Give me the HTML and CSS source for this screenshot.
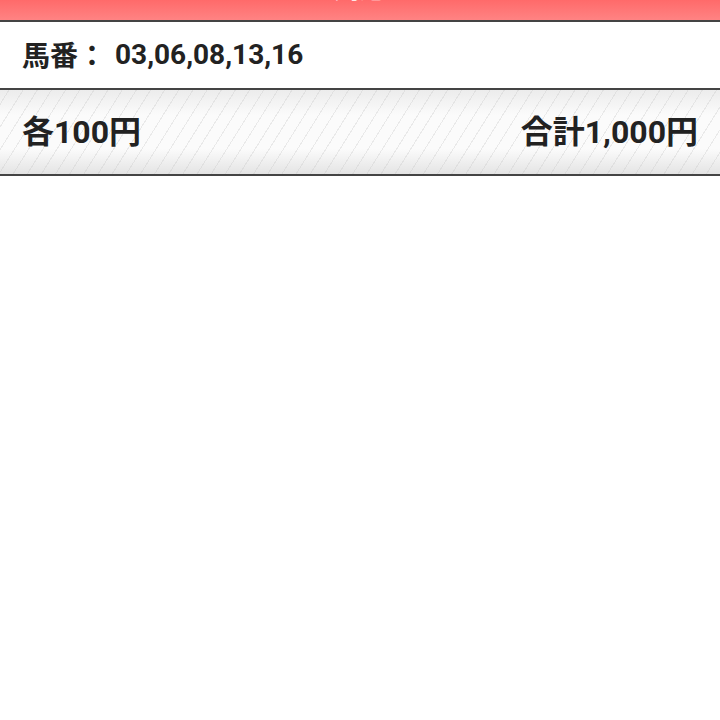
FILE: index.html
```html
<!DOCTYPE html>
<html lang="ja">
<head>
	<meta charset="UTF-8">
	<title>馬連</title>
	<link rel="stylesheet" href="styles.css">
</head>
<body>
	<div class="header">
		<h1 class="title">馬連</h1>
	</div>
	<div class="numbers">
		<span class="label">馬番：</span>
		<span class="nums">03,06,08,13,16</span>
	</div>
	<div class="total">
		<span>各100円</span>
		<span>合計1,000円</span>
	</div>
</body>
</html>
```

FILE: styles.css
```css
html,body {
	margin: 0;
	padding: 0;
	background: #fff;
	font-family: Roboto, "Noto Sans CJK JP", sans-serif;
	color: #222;
}
.header {
	height: 20px;
	overflow: hidden;
	display: flex;
	justify-content: center;
	align-items: flex-end;
	background: linear-gradient(#ff6a6a, #ff8383);
	border-bottom: 2px solid #444;
}
.title {
	margin: 0 0 18px;
	font-size: 26px;
	line-height: 26px;
	color: #fff;
}
.numbers {
	height: 64px;
	display: flex;
	align-items: center;
	padding: 0 22px 2px;
	font-size: 28px;
	font-weight: bold;
	border-bottom: 2px solid #444;
}
.numbers .label {
	margin-right: 9px;
}
.total {
	height: 78px;
	display: flex;
	align-items: center;
	justify-content: space-between;
	padding: 0 22px 6px;
	font-size: 32px;
	font-weight: bold;
	border-bottom: 2px solid #444;
	background:
		repeating-linear-gradient(-58deg, rgba(255,255,255,0) 0, rgba(255,255,255,0) 11px, rgba(200,200,200,0.35) 11px, rgba(200,200,200,0.35) 12px),
		linear-gradient(#ececec, #fbfbfb 30%, #fbfbfb 70%, #e4e4e4);
}
```
